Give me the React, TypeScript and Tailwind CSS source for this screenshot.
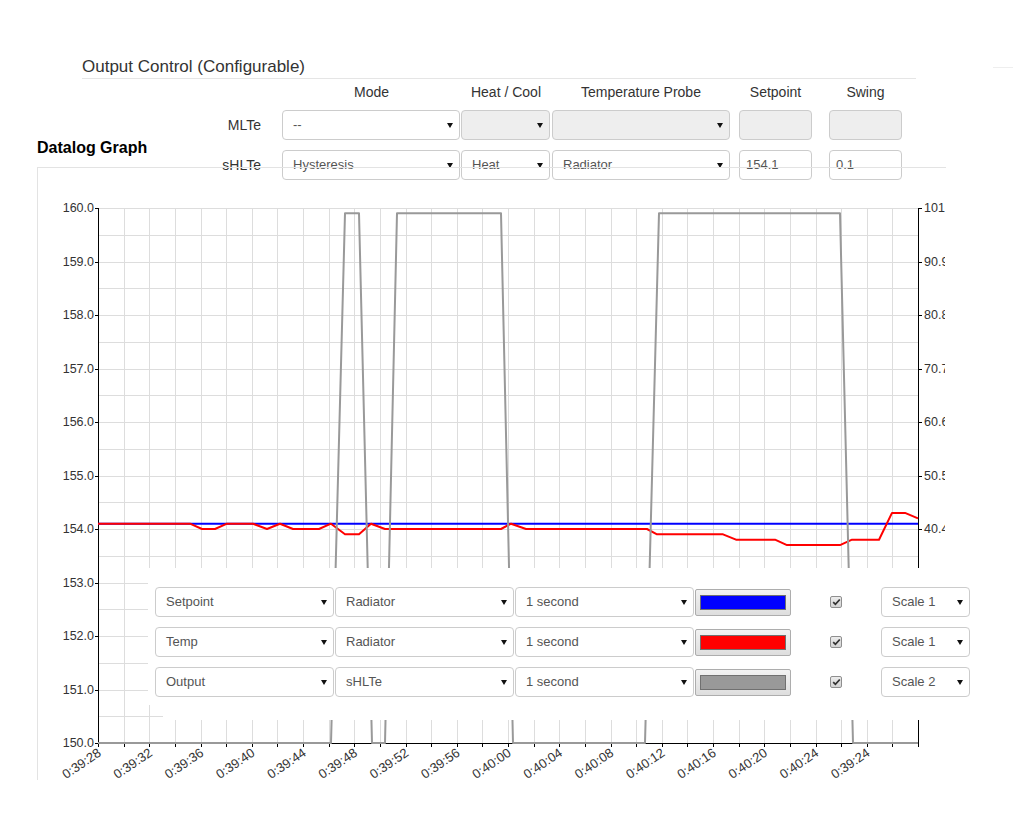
import React from 'react';

const X0 = 98;
const X1 = 918;
const Y0 = 208;
const Y1 = 743;
const XSTEP = (X1 - X0) / 32;
const YSTEP = (Y1 - Y0) / 20;

const crisp = (n: number) => Math.round(n) + 0.5;
const yTemp = (v: number) => Y1 - (v - 150) * 53.5;
const yOut = (v: number) => Y1 - (v / 101) * 535;

const leftLabels = ['160.0', '159.0', '158.0', '157.0', '156.0', '155.0', '154.0', '153.0', '152.0', '151.0', '150.0'];
const rightLabels = ['101', '90.9', '80.8', '70.7', '60.6', '50.5', '40.4'];
const timeLabels = [
  '0:39:28', '0:39:32', '0:39:36', '0:39:40', '0:39:44', '0:39:48', '0:39:52', '0:39:56',
  '0:40:00', '0:40:04', '0:40:08', '0:40:12', '0:40:16', '0:40:20', '0:40:24', '0:39:24',
];

// temp readings, [x, degrees]
const tempPoints: [number, number][] = [
  [98, 154.1], [190, 154.1], [202, 154.0], [215, 154.0], [227, 154.1], [253, 154.1], [267, 154.0],
  [280, 154.1], [293, 154.0], [319, 154.0], [331, 154.1], [345, 153.9], [359, 153.9], [371, 154.1],
  [385, 154.0], [501, 154.0], [511, 154.1], [526, 154.0], [647, 154.0], [657, 153.9], [723, 153.9],
  [736, 153.8], [775, 153.8], [787, 153.7], [840, 153.7], [852, 153.8], [879, 153.8], [892, 154.3],
  [905, 154.3], [918, 154.2],
];

// output on/off, [x, percent]
const outputPoints: [number, number][] = [
  [98, 0], [331, 0], [345, 100], [359, 100], [372, 0], [385, 0], [397, 100], [501, 100], [513, 0],
  [645, 0], [659, 100], [840, 100], [853, 0], [918, 0],
];

const toPath = (pts: [number, number][], fy: (v: number) => number) =>
  pts.map(([x, v], i) => `${i === 0 ? 'M' : 'L'}${x} ${fy(v).toFixed(1)}`).join(' ');

function Arrow() {
  return (
    <svg width="6" height="5" viewBox="0 0 6 5" className="shrink-0">
      <path d="M0 0H6L3 5Z" fill="#111" />
    </svg>
  );
}

function Select({ value, className = '', disabled = false }: { value: string; className?: string; disabled?: boolean }) {
  return (
    <div
      className={`flex h-[30px] items-center justify-between rounded-[4px] border border-[#ccc] pl-[10px] pr-[6px] text-[13px] text-[#555] ${disabled ? 'bg-[#eee]' : 'bg-transparent'} ${className}`}
    >
      <span>{value}</span>
      <Arrow />
    </div>
  );
}

function TextBox({ value, className = '', disabled = false }: { value: string; className?: string; disabled?: boolean }) {
  return (
    <div
      className={`flex h-[30px] w-[73px] items-center rounded-[4px] border border-[#ccc] pl-[6px] text-[13px] text-[#555] ${disabled ? 'bg-[#eee]' : 'bg-transparent'} ${className}`}
    >
      {value}
    </div>
  );
}

function CheckBox() {
  return (
    <span className="flex h-[12px] w-[12px] items-center justify-center rounded-[2px] border border-[#8f8f8f] bg-linear-to-b from-[#ececec] to-[#d4d4d4]">
      <svg width="9" height="8" viewBox="0 0 9 8">
        <path d="M1.2 4.2L3.4 6.3L7.8 1.5" fill="none" stroke="#333" strokeWidth="1.8" />
      </svg>
    </span>
  );
}

const series = [
  { name: 'Setpoint', probe: 'Radiator', rate: '1 second', swatch: 'bg-[#0000ff]', scale: 'Scale 1' },
  { name: 'Temp', probe: 'Radiator', rate: '1 second', swatch: 'bg-[#ff0000]', scale: 'Scale 1' },
  { name: 'Output', probe: 'sHLTe', rate: '1 second', swatch: 'bg-[#999999]', scale: 'Scale 2' },
];

function Chart() {
  const vlines = Array.from({ length: 31 }, (_, i) => X0 + (i + 1) * XSTEP);
  const hlines = Array.from({ length: 20 }, (_, i) => Y0 + i * YSTEP);
  const xticks = Array.from({ length: 33 }, (_, i) => X0 + i * XSTEP);

  return (
    <svg width="907" height="612" className="block">
      <g transform="translate(-38 -168)">
        {hlines.map(y => (
          <line key={`h${y}`} x1={X0} x2={X1} y1={crisp(y)} y2={crisp(y)} stroke="#ddd" />
        ))}
        {vlines.map(x => (
          <line key={`v${x}`} x1={crisp(x)} x2={crisp(x)} y1={Y0} y2={Y1} stroke="#ddd" />
        ))}

        <line x1={X0 + 0.5} x2={X0 + 0.5} y1={Y0} y2={Y1 + 1} stroke="#000" />
        <line x1={X1 + 0.5} x2={X1 + 0.5} y1={Y0} y2={Y1 + 1} stroke="#000" />
        <line x1={X0} x2={X1 + 1} y1={Y1 + 0.5} y2={Y1 + 0.5} stroke="#000" />

        {leftLabels.map((label, i) => {
          const y = Y0 + i * 2 * YSTEP;
          return (
            <g key={label}>
              <line x1={95} x2={98} y1={crisp(y)} y2={crisp(y)} stroke="#000" />
              <text x={94} y={y + 4} textAnchor="end" fontSize="12.5" fill="#333">{label}</text>
            </g>
          );
        })}
        {rightLabels.map((label, i) => {
          const y = Y0 + i * 2 * YSTEP;
          return (
            <g key={label}>
              <line x1={919} x2={922} y1={crisp(y)} y2={crisp(y)} stroke="#000" />
              <text x={924} y={y + 4} fontSize="12.5" fill="#333">{label}</text>
            </g>
          );
        })}
        {xticks.map(x => (
          <line key={`t${x}`} x1={crisp(x)} x2={crisp(x)} y1={Y1} y2={Y1 + 4} stroke="#000" />
        ))}
        {timeLabels.map((label, i) => {
          const x = X0 + i * 2 * XSTEP + 4;
          const y = 755;
          return (
            <text key={label + i} x={x} y={y} textAnchor="end" fontSize="13" fill="#333" transform={`rotate(-34 ${x} ${y})`}>
              {label}
            </text>
          );
        })}

        <line x1={X0} x2={X1} y1={yTemp(154.1)} y2={yTemp(154.1)} stroke="#0000ff" strokeWidth="2" />
        <path d={toPath(tempPoints, yTemp)} fill="none" stroke="#ff0000" strokeWidth="2" strokeLinejoin="round" />
        <path d={toPath(outputPoints, yOut)} fill="none" stroke="#999" strokeWidth="2" strokeLinejoin="round" />
      </g>
    </svg>
  );
}

export default function App() {
  return (
    <div className="min-h-[814px] bg-white font-['Liberation_Sans',Arial,sans-serif] text-[#333]">
      <div className="flex items-start pt-[57px]">
        <div className="ml-[82px] w-[834px]">
          <h2 className="text-[17px] leading-[20px]">Output Control (Configurable)</h2>
          <div className="mt-[1px] h-px bg-[#e5e5e5]" />
        </div>
        <div className="ml-[77px] mt-[10px] h-px w-[20px] bg-[#eee]" />
      </div>

      <div className="ml-[82px] mt-[3px] text-[14px]">
        <div className="flex h-[20px] items-center leading-[20px]">
          <div className="w-[200px]" />
          <div className="w-[179px] text-center">Mode</div>
          <div className="w-[90px] text-center">Heat / Cool</div>
          <div className="w-[180px] text-center">Temperature Probe</div>
          <div className="w-[89px] text-center">Setpoint</div>
          <div className="w-[91px] text-center">Swing</div>
        </div>

        <div className="mt-[8px] flex items-center">
          <div className="w-[200px] pr-[21px] text-right">MLTe</div>
          <Select value="--" className="w-[178px] bg-white" />
          <Select value="" disabled className="ml-[1px] w-[89px]" />
          <Select value="" disabled className="ml-[2px] w-[178px]" />
          <TextBox value="" disabled className="ml-[9px]" />
          <TextBox value="" disabled className="ml-[17px]" />
        </div>

        <div className="mt-[10px] flex items-center">
          <div className="w-[200px] pr-[21px] text-right">sHLTe</div>
          <Select value="Hysteresis" className="w-[178px]" />
          <Select value="Heat" className="ml-[1px] w-[89px]" />
          <Select value="Radiator" className="ml-[2px] w-[178px]" />
          <TextBox value="154.1" className="ml-[9px]" />
          <TextBox value="0.1" className="ml-[17px]" />
        </div>
      </div>

      <div className="-mt-[42px] ml-[37px]">
        <h3 className="text-[16px] font-bold leading-[20px] text-black">Datalog Graph</h3>
        <div className="relative mt-[9px] h-[613px] w-[909px] border-l border-t border-[#e3e3e3]">
          <Chart />

          <div className="absolute left-[110px] top-[400px] w-[830px]">
            <div className="flex flex-col gap-[10px] bg-white pb-[8px] pl-[7px] pt-[19px]">
              {series.map(s => (
                <div key={s.name} className="flex items-center">
                  <Select value={s.name} className="w-[179px] bg-white" />
                  <Select value={s.probe} className="ml-[1px] w-[179px] bg-white" />
                  <Select value={s.rate} className="ml-[1px] w-[179px] bg-white" />
                  <div className="ml-[1px] flex h-[27px] w-[96px] items-center justify-center rounded-[2px] border border-[#adadad] bg-linear-to-b from-[#f2f2f2] to-[#dedede]">
                    <div className={`h-[15px] w-[86px] border border-[#707070] ${s.swatch}`} />
                  </div>
                  <div className="ml-[39px]">
                    <CheckBox />
                  </div>
                  <Select value={s.scale} className="ml-[39px] w-[89px] bg-white" />
                </div>
              ))}
            </div>
            <div className="ml-[15px] h-[15px] bg-white" />
          </div>
        </div>
      </div>
    </div>
  );
}
